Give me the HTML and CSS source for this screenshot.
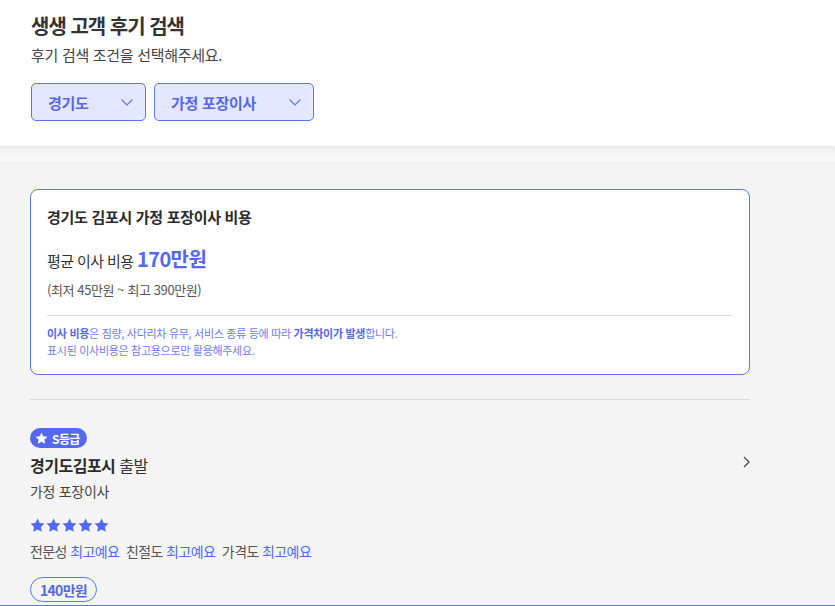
FILE: index.html
```html
<!DOCTYPE html>
<html lang="ko">
<head>
<meta charset="utf-8">
<link rel="stylesheet" href="styles.css">
</head>
<body>
<header class="top">
  <h1 class="title">생생 고객 후기 검색</h1>
  <p class="subtitle">후기 검색 조건을 선택해주세요.</p>
  <div class="filters">
    <button class="select sel-region"><span>경기도</span>
      <svg width="12" height="7" viewBox="0 0 12 7"><path d="M0.5 0.5 L6 6 L11.5 0.5" fill="none" stroke="#5f72ef" stroke-width="1.1"/></svg>
    </button>
    <button class="select sel-type"><span>가정 포장이사</span>
      <svg width="12" height="7" viewBox="0 0 12 7"><path d="M0.5 0.5 L6 6 L11.5 0.5" fill="none" stroke="#5f72ef" stroke-width="1.1"/></svg>
    </button>
  </div>
</header>
<div class="band"></div>
<main class="content">
  <section class="cost-card">
    <h2 class="cost-title">경기도 김포시 가정 포장이사 비용</h2>
    <p class="avg">평균 이사 비용 <strong class="avg-num">170만원</strong></p>
    <p class="range">(최저 45만원 ~ 최고 390만원)</p>
    <hr class="divider">
    <p class="note"><b>이사 비용</b>은 짐량, 사다리차 유무, 서비스 종류 등에 따라 <b>가격차이가 발생</b>합니다.<br>표시된 이사비용은 참고용으로만 활용해주세요.</p>
  </section>
  <hr class="sep">
  <article class="review">
    <div class="review-body">
      <span class="badge">
        <svg width="13" height="13" viewBox="0 0 24 24"><path d="M12 1l3.3 6.9 7.6 1-5.5 5.3 1.4 7.6L12 18.2l-6.8 3.6 1.4-7.6L1.1 8.9l7.6-1z" fill="#fff"/></svg>
        S등급</span>
      <h3 class="route"><b>경기도김포시</b> 출발</h3>
      <p class="kind">가정 포장이사</p>
      <div class="stars">
        <svg width="15" height="15" viewBox="0 0 24 24"><path d="M12 0.8l3.4 7 7.7 1.1-5.6 5.4 1.4 7.7L12 18.4l-6.9 3.6 1.4-7.7L0.9 8.9l7.7-1.1z" fill="#4f68f5"/></svg>
        <svg width="15" height="15" viewBox="0 0 24 24"><path d="M12 0.8l3.4 7 7.7 1.1-5.6 5.4 1.4 7.7L12 18.4l-6.9 3.6 1.4-7.7L0.9 8.9l7.7-1.1z" fill="#4f68f5"/></svg>
        <svg width="15" height="15" viewBox="0 0 24 24"><path d="M12 0.8l3.4 7 7.7 1.1-5.6 5.4 1.4 7.7L12 18.4l-6.9 3.6 1.4-7.7L0.9 8.9l7.7-1.1z" fill="#4f68f5"/></svg>
        <svg width="15" height="15" viewBox="0 0 24 24"><path d="M12 0.8l3.4 7 7.7 1.1-5.6 5.4 1.4 7.7L12 18.4l-6.9 3.6 1.4-7.7L0.9 8.9l7.7-1.1z" fill="#4f68f5"/></svg>
        <svg width="15" height="15" viewBox="0 0 24 24"><path d="M12 0.8l3.4 7 7.7 1.1-5.6 5.4 1.4 7.7L12 18.4l-6.9 3.6 1.4-7.7L0.9 8.9l7.7-1.1z" fill="#4f68f5"/></svg>
      </div>
      <p class="ratings">전문성 <span class="hl">최고예요</span>&nbsp; 친절도 <span class="hl">최고예요</span>&nbsp; 가격도 <span class="hl">최고예요</span></p>
      <span class="price">140만원</span>
    </div>
    <svg class="arrow" width="7" height="12" viewBox="0 0 7 12"><path d="M1 1 L6 6 L1 11" fill="none" stroke="#444" stroke-width="1.2"/></svg>
  </article>
</main>
<div class="bottom-line"></div>
</body>
</html>
```

FILE: styles.css
```css
* { box-sizing: border-box; }
html, body { margin: 0; padding: 0; }
body {
  background: #f4f4f4;
  font-family: "Noto Sans CJK KR", "Noto Sans", sans-serif;
  color: #333;
  width: 835px;
  height: 606px;
  overflow: hidden;
  position: relative;
}
p, h1, h2, h3 { margin: 0; }

.top {
  background: #fff;
  padding: 12px 31px 25px;
}
.title {
  font-size: 20px;
  line-height: 28px;
  font-weight: 700;
  color: #333;
  letter-spacing: -1px;
}
.subtitle {
  margin-top: 4px;
  font-size: 15px;
  line-height: 22px;
  color: #444;
  letter-spacing: -0.3px;
}
.filters {
  display: flex;
  gap: 8px;
  margin-top: 17px;
}
.select {
  height: 38px;
  display: flex;
  align-items: center;
  justify-content: space-between;
  background: #e3e7ff;
  border: 1px solid #5c74f2;
  border-radius: 5px;
  padding: 0 12px 0 16px;
  font-family: inherit;
  font-size: 15px;
  font-weight: 700;
  color: #5468e8;
  letter-spacing: -0.3px;
}
.sel-region { width: 115px; }
.sel-type { width: 160px; }

.band {
  height: 15px;
  background: linear-gradient(#eeeeee, #fbfbfb);
  border-top: 1px solid #ebebeb;
}

.content {
  padding: 28px 30px 0;
  width: 780px;
}
.cost-card {
  width: 720px;
  background: #fff;
  border: 1px solid #5c74f2;
  border-radius: 8px;
  padding: 16px 16px 15px 16px;
}
.cost-title {
  font-size: 15px;
  line-height: 22px;
  font-weight: 700;
  color: #2b2b2b;
  letter-spacing: -0.3px;
}
.avg {
  margin-top: 17px;
  font-size: 15px;
  line-height: 28px;
  color: #333;
  letter-spacing: -0.6px;
}
.avg-num {
  font-size: 20px;
  font-weight: 700;
  color: #5468f0;
  letter-spacing: -0.6px;
}
.range {
  margin-top: 5px;
  font-size: 13px;
  line-height: 20px;
  color: #555;
  letter-spacing: -0.4px;
}
.divider {
  margin: 15px 0 0;
  border: 0;
  border-top: 1px solid #dcdce2;
}
.note {
  margin-top: 9px;
  font-size: 11px;
  line-height: 17px;
  color: #6e7cf2;
  letter-spacing: -0.3px;
}
.note b { color: #5468f0; font-weight: 700; }

.sep {
  width: 720px;
  margin: 24px 0 0;
  border: 0;
  border-top: 1px solid #dcdce0;
}

.review {
  width: 720px;
  display: flex;
  justify-content: space-between;
  align-items: flex-start;
  padding-top: 28px;
}
.review-body { display: flex; flex-direction: column; align-items: flex-start; }
.badge {
  display: inline-flex;
  align-items: center;
  gap: 4px;
  height: 20px;
  padding: 0 7px 0 5px;
  border-radius: 10px;
  background: #5468f0;
  color: #fff;
  font-size: 12px;
  font-weight: 700;
  letter-spacing: -0.6px;
}
.route {
  margin-top: 5px;
  font-size: 16px;
  line-height: 24px;
  font-weight: 400;
  color: #333;
  letter-spacing: -0.5px;
}
.route b { font-weight: 700; color: #2b2b2b; }
.kind {
  margin-top: 4px;
  font-size: 14px;
  line-height: 20px;
  color: #444;
  letter-spacing: -0.3px;
}
.stars {
  margin-top: 16px;
  display: flex;
  gap: 1px;
  height: 16px;
  align-items: center;
}
.ratings {
  margin-top: 8px;
  font-size: 14px;
  line-height: 20px;
  color: #555;
  letter-spacing: -0.6px;
}
.hl { color: #5468f0; }
.price {
  margin-top: 16px;
  display: inline-flex;
  align-items: center;
  height: 25px;
  padding: 0 9px;
  border: 1px solid #5c74f2;
  border-radius: 13px;
  font-size: 14px;
  font-weight: 700;
  color: #5468e8;
  letter-spacing: -0.7px;
  background: #f4f4f4;
}
.arrow { margin-top: 28px; margin-right: 0; }

.bottom-line {
  position: absolute;
  left: 0;
  right: 0;
  bottom: 0;
  height: 1px;
  background: #5c74f2;
}
```
